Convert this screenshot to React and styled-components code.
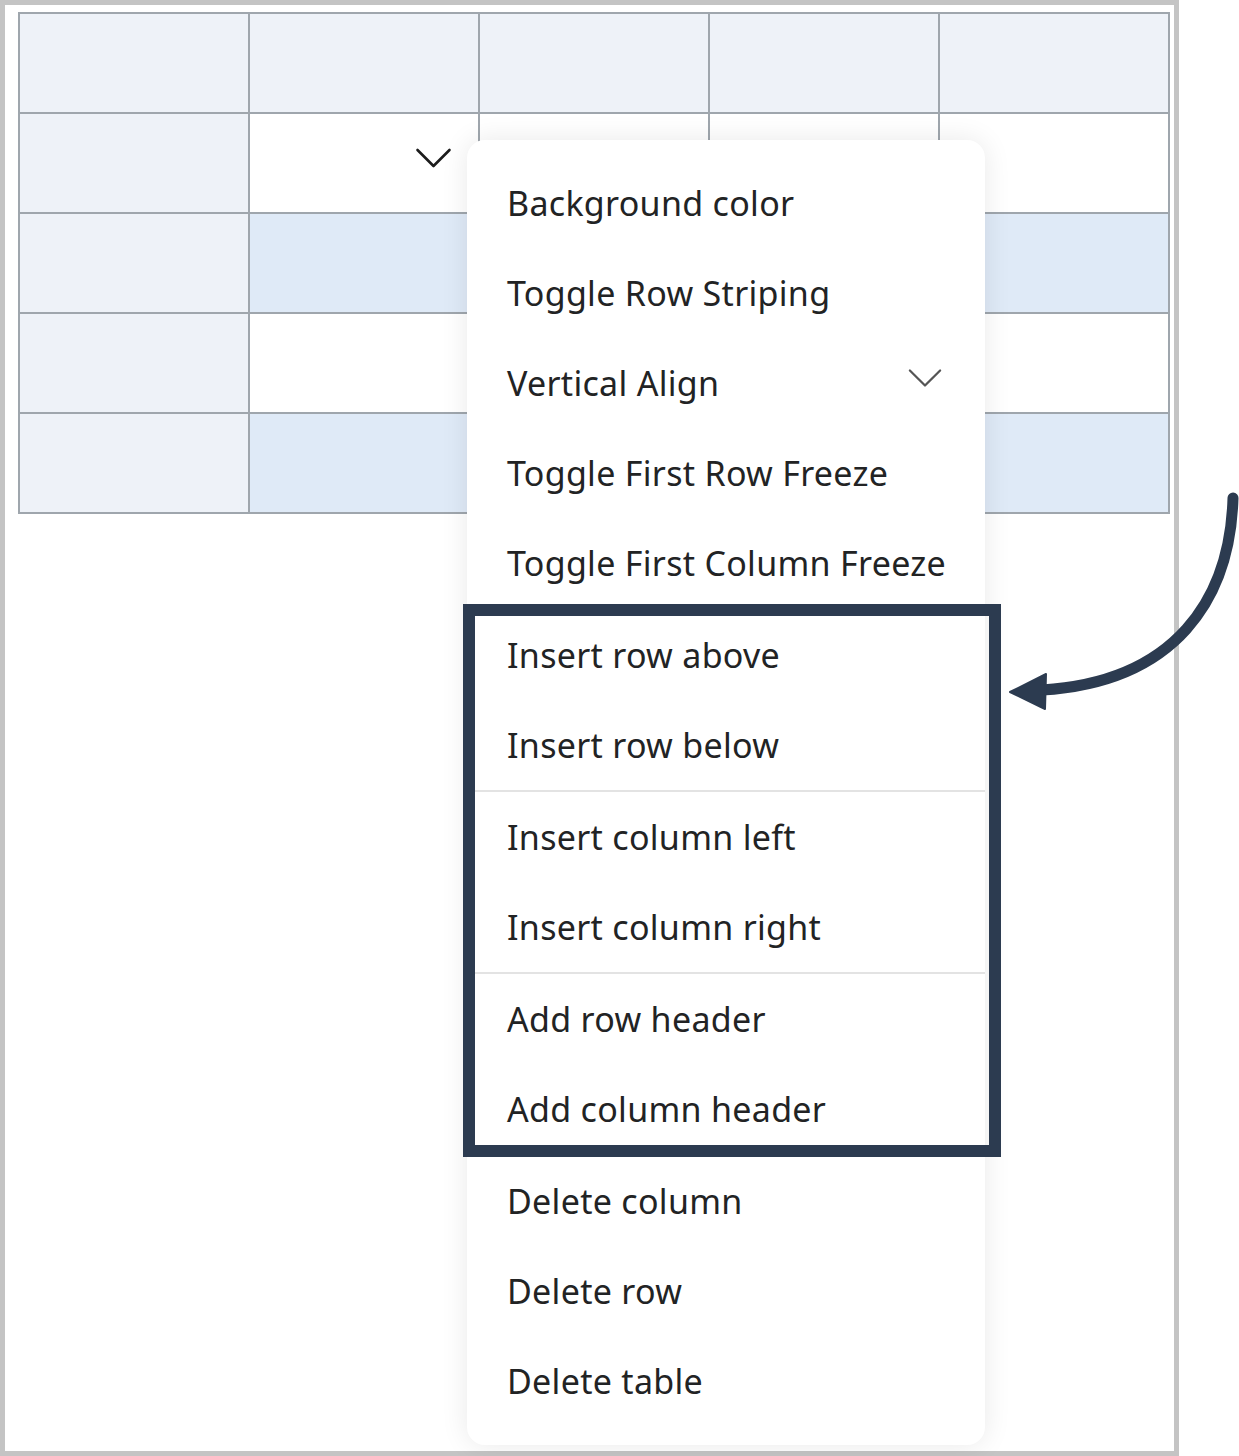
import React from "react";
import styled, { createGlobalStyle } from "styled-components";

const Global = createGlobalStyle`
  html, body { margin: 0; padding: 0; background: #ffffff; }
  body { font-family: "Noto Sans", "Open Sans", sans-serif; }
`;

const Page = styled.div`
  position: relative;
  width: 1239px;
  height: 1456px;
  overflow: hidden;
`;

const Frame = styled.div`
  box-sizing: border-box;
  width: 1179px;
  height: 1456px;
  border: 5px solid #c4c4c4;
  padding: 7px 0 0 13px;
  background: #ffffff;
`;

const Grid = styled.div`
  display: grid;
  grid-template-columns: repeat(5, 228px);
  grid-auto-rows: 98px;
  gap: 2px;
  padding: 2px;
  width: max-content;
  background: #9fa6ad;
`;

const Cell = styled.div`
  display: flex;
  justify-content: flex-end;
  align-items: flex-start;
  background: ${(p) =>
    p.$kind === "head" ? "#eef2f8" : p.$kind === "stripe" ? "#dfeaf7" : "#ffffff"};
`;

const CellChevron = styled.svg`
  margin: 34px 26px 0 0;
  width: 37px;
  height: 20px;
`;

const Menu = styled.div`
  position: absolute;
  left: 467px;
  top: 140px;
  width: 518px;
  box-sizing: border-box;
  padding: 18px 0 19px;
  background: #ffffff;
  border-radius: 18px;
  box-shadow: 0 0 28px rgba(0, 0, 0, 0.09);
  display: flex;
  flex-direction: column;
`;

const Item = styled.div`
  height: 90px;
  display: flex;
  align-items: center;
  justify-content: space-between;
  padding: 0 43px 0 40px;
  font-size: 34px;
  color: #222324;
  white-space: nowrap;
  letter-spacing: 0.3px;
`;

const Divider = styled.div`
  height: 2px;
  background: #e3e3e3;
`;

const AlignChevron = styled.svg`
  width: 34px;
  height: 20px;
  margin-top: -10px;
`;

const Highlight = styled.div`
  position: absolute;
  left: 463px;
  top: 604px;
  width: 538px;
  height: 553px;
  box-sizing: border-box;
  border: 12px solid #2c3b50;
  pointer-events: none;
`;

const ArrowLayer = styled.svg`
  position: absolute;
  left: 0;
  top: 0;
  width: 1239px;
  height: 1456px;
  pointer-events: none;
`;

const rowKinds = ["head", "plain", "stripe", "plain", "stripe"];

const sections = [
  ["Background color", "Toggle Row Striping", "Vertical Align", "Toggle First Row Freeze", "Toggle First Column Freeze"],
  ["Insert row above", "Insert row below"],
  ["Insert column left", "Insert column right"],
  ["Add row header", "Add column header"],
  ["Delete column", "Delete row", "Delete table"],
];

function Chevron({ as: Comp, color, width }) {
  return (
    <Comp viewBox="0 0 36 20" fill="none">
      <path d="M2 2 L18 18 L34 2" stroke={color} strokeWidth={width} strokeLinecap="round" strokeLinejoin="round" />
    </Comp>
  );
}

export default function App() {
  return (
    <>
      <Global />
      <Page>
        <Frame>
          <Grid>
            {rowKinds.map((kind, r) =>
              [0, 1, 2, 3, 4].map((c) => (
                <Cell key={`${r}-${c}`} $kind={c === 0 || r === 0 ? "head" : kind}>
                  {r === 1 && c === 1 && <Chevron as={CellChevron} color="#1c1c1c" width={2.6} />}
                </Cell>
              ))
            )}
          </Grid>
        </Frame>

        <Menu>
          {sections.map((items, i) => (
            <React.Fragment key={i}>
              {i > 0 && <Divider />}
              {items.map((label) => (
                <Item key={label}>
                  <span>{label}</span>
                  {label === "Vertical Align" && <Chevron as={AlignChevron} color="#555555" width={2.4} />}
                </Item>
              ))}
            </React.Fragment>
          ))}
        </Menu>

        <Highlight />

        <ArrowLayer viewBox="0 0 1239 1456">
          <path
            d="M1233 498 C 1230 600, 1175 682, 1042 690"
            stroke="#2c3b50"
            strokeWidth="11"
            fill="none"
            strokeLinecap="round"
          />
          <path d="M1010 692 L1046 674 L1045 709 Z" fill="#2c3b50" stroke="#2c3b50" strokeWidth="2" strokeLinejoin="round" />
        </ArrowLayer>
      </Page>
    </>
  );
}
